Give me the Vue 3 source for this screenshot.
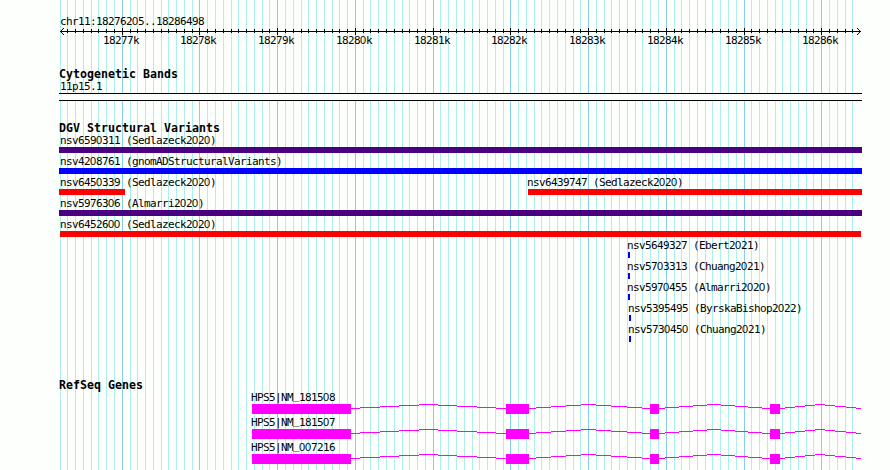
<script setup>
const region = { chr: 'chr11', start: 18276205, end: 18286498 }
const left = 60.5005
const scale = 800 / (region.end - region.start + 1)

const toX = (bp) => Math.floor(left + (bp - region.start) * scale)

// one line every 100 bp, a major one every 1000 bp
const ticks = []
for (let bp = 18276200; bp <= 18286400; bp += 100) {
  ticks.push({ bp, x: toX(bp), major: bp % 1000 === 0 })
}
const majors = ticks.filter((t) => t.major)

const variantRows = [
  [{ name: 'nsv6590311 (Sedlazeck2020)', x: 59, end: 862, tx: 60, type: 'complex' }],
  [{ name: 'nsv4208761 (gnomADStructuralVariants)', x: 59, end: 862, tx: 60, type: 'gain' }],
  [
    { name: 'nsv6450339 (Sedlazeck2020)', x: 59, end: 125, tx: 60, type: 'loss' },
    { name: 'nsv6439747 (Sedlazeck2020)', x: 528, end: 862, tx: 527, type: 'loss' }
  ],
  [{ name: 'nsv5976306 (Almarri2020)', x: 59, end: 862, tx: 60, type: 'complex' }],
  [{ name: 'nsv6452600 (Sedlazeck2020)', x: 60, end: 861, tx: 60, type: 'loss' }],
  [{ name: 'nsv5649327 (Ebert2021)', x: 628, end: 630, tx: 627, type: 'gain' }],
  [{ name: 'nsv5703313 (Chuang2021)', x: 628, end: 630, tx: 627, type: 'gain' }],
  [{ name: 'nsv5970455 (Almarri2020)', x: 628, end: 630, tx: 627, type: 'gain' }],
  [{ name: 'nsv5395495 (ByrskaBishop2022)', x: 629, end: 631, tx: 628, type: 'gain' }],
  [{ name: 'nsv5730450 (Chuang2021)', x: 629, end: 631, tx: 628, type: 'gain' }]
]

const genes = ['HPS5|NM_181508', 'HPS5|NM_181507', 'HPS5|NM_007216']
const exons = [
  [252, 351],
  [506, 529],
  [650, 659],
  [770, 780]
]
const introns = [
  [351, 506],
  [528.5, 649.5],
  [658.5, 769.5],
  [780, 861]
]

// hat shaped intron, drawn as one pixel steps
const steps = introns.flatMap(([a, b]) => {
  const levels = [16, 15, 14, 13, 12, 13, 14, 15, 16]
  const edges = [Math.round(a)]
  for (let i = 0; i < 8; i++) {
    edges.push(Math.round(a + ((i + 0.5) * (b - a)) / 8 - 0.3))
  }
  edges.push(Math.round(b))
  return levels.map((y, i) => ({ x: edges[i], y, w: edges[i + 1] - edges[i] }))
})

// zeros and underscores are styled apart from the rest of a label
const split = (text) => text.split(/(0+|_)/).filter(Boolean)
const partClass = (s) => ({ zero: s[0] === '0', underscore: s === '_' })
</script>

<template>
  <div class="browser">
    <svg class="grid" width="890" height="470">
      <rect
        v-for="t in ticks"
        :key="t.bp"
        :x="t.x"
        y="0"
        width="1"
        height="470"
        :class="t.major ? 'major' : 'minor'"
      />
    </svg>

    <div class="tracks">
      <svg class="ruler" width="890" height="64">
        <text x="60" y="25">
          <tspan
            v-for="(s, i) in split(`${region.chr}:${region.start}..${region.end}`)"
            :key="i"
            :class="partClass(s)"
          >{{ s }}</tspan>
        </text>
        <rect x="60" y="31" width="801" height="1" />
        <rect
          v-for="t in ticks.slice(1)"
          :key="t.bp"
          :x="t.x"
          :y="t.major ? 28 : 29"
          width="1"
          :height="t.major ? 7 : 4"
        />
        <g v-for="n in 3" :key="n">
          <rect :x="60 + n" :y="31 - n" width="1" height="1" />
          <rect :x="60 + n" :y="31 + n" width="1" height="1" />
          <rect :x="860 - n" :y="31 - n" width="1" height="1" />
          <rect :x="860 - n" :y="31 + n" width="1" height="1" />
        </g>
        <text v-for="t in majors" :key="t.bp" :x="t.x - 19" y="44">
          <tspan v-for="(s, i) in split(t.bp / 1000 + 'k')" :key="i" :class="partClass(s)">{{ s }}</tspan>
        </text>
      </svg>

      <h2>Cytogenetic Bands</h2>
      <svg width="890" height="37">
        <text x="60" y="9">11p15.1</text>
        <rect x="59" y="12" width="803" height="8" />
        <rect class="band" x="59" y="13" width="803" height="6" />
      </svg>

      <h2>DGV Structural Variants</h2>
      <svg v-for="(row, r) in variantRows" :key="r" width="890" height="21">
        <g v-for="v in row" :key="v.name">
          <text :x="v.tx" y="9">
            <tspan v-for="(s, i) in split(v.name)" :key="i" :class="partClass(s)">{{ s }}</tspan>
          </text>
          <rect :x="v.x" y="12" :width="v.end - v.x" height="6" :class="v.type" />
        </g>
      </svg>

      <h2 class="genes">RefSeq Genes</h2>
      <svg v-for="gene in genes" :key="gene" width="890" height="25">
        <g class="gene">
          <rect v-for="(s, i) in steps" :key="i" :x="s.x" :y="s.y" :width="s.w" height="1" />
          <rect v-for="e in exons" :key="e[0]" :x="e[0]" y="12" :width="e[1] - e[0]" height="10" />
        </g>
        <text x="251" y="9">
          <tspan v-for="(s, i) in split(gene)" :key="i" :class="partClass(s)">{{ s }}</tspan>
        </text>
      </svg>
    </div>
  </div>
</template>

<style>
body {
  margin: 0;
  background: #fdfffc;
}
</style>

<style scoped>
.browser {
  position: relative;
  width: 890px;
  height: 470px;
  overflow: hidden;
  background: #fdfffc;
  color: #000;
  font-family: 'DejaVu Sans Mono', monospace;
  font-size: 11px;
}
.grid {
  position: absolute;
  top: 0;
  left: 0;
}
.tracks {
  position: relative;
  display: flex;
  flex-direction: column;
}
svg {
  display: block;
  flex: none;
  overflow: visible;
  shape-rendering: crispEdges;
}
text {
  letter-spacing: -0.622px;
  white-space: pre;
}
.zero {
  font-family: 'Liberation Sans', sans-serif;
  letter-spacing: -0.118px;
}
.underscore {
  baseline-shift: 2px;
}
h2 {
  box-sizing: border-box;
  height: 17px;
  margin: 0;
  padding: 4px 0 0 59px;
  font-size: 11.6px;
  line-height: 13px;
  font-weight: bold;
  letter-spacing: 0.016px;
}
.genes {
  margin-top: 30px;
}
.minor {
  fill: #afeeee;
}
.major {
  fill: #87ceeb;
}
.band {
  fill: #fdfffc;
}
.complex {
  fill: #4b0082;
}
.gain {
  fill: #0000ff;
}
.loss {
  fill: #ff0000;
}
.gene {
  fill: #ff00ff;
}
</style>
